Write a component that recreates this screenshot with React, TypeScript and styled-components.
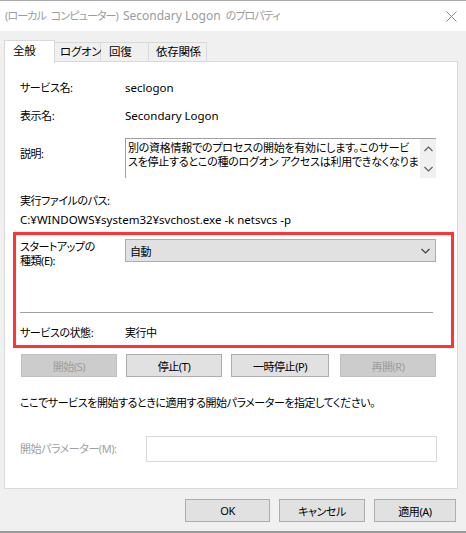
import React from 'react';
import styled, { createGlobalStyle } from 'styled-components';

const GlobalStyle = createGlobalStyle`
  html, body {
    margin: 0;
    padding: 0;
    background: #f0f0f0;
  }
  body {
    font-family: "Noto Sans", "Noto Sans CJK JP", sans-serif;
    font-size: 11px;
    color: #000;
  }
`;

const tabs = [
  { label: '全般', width: 51, pad: 9, active: true },
  { label: 'ログオン', width: 46, pad: 5 },
  { label: '回復', width: 48, pad: 8 },
  { label: '依存関係', width: 58, pad: 7 },
];

const Chevron: React.FC<{ up?: boolean; color?: string }> = ({ up, color = '#606060' }) => (
  <svg width="9" height="6" viewBox="0 0 9 6">
    <path
      d={up ? 'M0.5 5 L4.5 1 L8.5 5' : 'M0.5 1 L4.5 5 L8.5 1'}
      fill="none"
      stroke={color}
      strokeWidth="1.2"
    />
  </svg>
);

const App: React.FC = () => {
  return (
    <Window>
      <GlobalStyle />
      <TitleBar>
        <Title>
          (ローカル コンピューター) <TitleLatin>Secondary Logon</TitleLatin> のプロパティ
        </Title>
        <CloseIcon width="11" height="11" viewBox="0 0 11 11">
          <path d="M0.5 0.5 L10.5 10.5 M10.5 0.5 L0.5 10.5" stroke="#8a8a8a" strokeWidth="1" />
        </CloseIcon>
      </TitleBar>

      <TabRow>
        {tabs.map((t) => (
          <Tab key={t.label} $active={t.active} $width={t.width} $pad={t.pad}>
            {t.label}
          </Tab>
        ))}
      </TabRow>

      <Panel>
        <InfoRow $top={18}>
          <Label>サービス名:</Label>
          <Value $latin>seclogon</Value>
        </InfoRow>
        <InfoRow $top={12}>
          <Label>表示名:</Label>
          <Value $latin>Secondary Logon</Value>
        </InfoRow>
        <DescRow>
          <Label $pad={8}>説明:</Label>
          <DescBox>
            <DescText>
              別の資格情報でのプロセスの開始を有効にします。このサービ
              <br />
              スを停止するとこの種のログオン アクセスは利用できなくなりま
            </DescText>
            <ScrollBar>
              <Chevron up />
              <Chevron />
            </ScrollBar>
          </DescBox>
        </DescRow>

        <PlainLine $top={15}>実行ファイルのパス:</PlainLine>
        <PlainLine $top={3} $latin>
          C:¥WINDOWS¥system32¥svchost.exe -k netsvcs -p
        </PlainLine>

        <Highlight>
          <StartupRow>
            <TwoLineLabel>
              スタートアップの
              <br />
              種類(E):
            </TwoLineLabel>
            <Combo>
              <span>自動</span>
              <Chevron color="#404040" />
            </Combo>
          </StartupRow>
          <Separator />
          <StatusRow>
            <Label>サービスの状態:</Label>
            <Value>実行中</Value>
          </StatusRow>
        </Highlight>

        <ButtonRow>
          <ServiceButton disabled>開始(S)</ServiceButton>
          <ServiceButton>停止(T)</ServiceButton>
          <ServiceButton $width={98}>一時停止(P)</ServiceButton>
          <ServiceButton disabled>再開(R)</ServiceButton>
        </ButtonRow>

        <PlainLine $top={18}>ここでサービスを開始するときに適用する開始パラメーターを指定してください。</PlainLine>

        <ParamRow>
          <ParamLabel>開始パラメーター(M):</ParamLabel>
          <ParamInput />
        </ParamRow>
      </Panel>

      <DialogButtons>
        <DialogButton $width={85}>OK</DialogButton>
        <DialogButton $width={86}>キャンセル</DialogButton>
        <DialogButton $width={82}>適用(A)</DialogButton>
      </DialogButtons>
    </Window>
  );
};

const Window = styled.div`
  width: 466px;
  height: 533px;
  box-sizing: border-box;
  background: #f0f0f0;
  border-bottom: 2px solid #9a9a9a;
  overflow: hidden;
  font-feature-settings: "palt";
  letter-spacing: -0.45px;
`;

const TitleBar = styled.div`
  height: 31px;
  box-sizing: border-box;
  background: #fff;
  border-top: 1px solid #aaaaaa;
  display: flex;
  align-items: center;
  justify-content: space-between;
  padding: 0 9px 0 5px;
`;

const Title = styled.div`
  color: #9b9b9b;
  font-size: 11px;
  line-height: 16px;
  letter-spacing: -0.9px;
  word-spacing: 3px;
  white-space: nowrap;
`;

const TitleLatin = styled.span`
  font-size: 12px;
  letter-spacing: 0;
  word-spacing: 0;
`;

const CloseIcon = styled.svg`
  display: block;
  margin-top: 1px;
`;

const TabRow = styled.div`
  display: flex;
  align-items: flex-end;
  padding: 8px 0 0 4px;
  height: 23px;
  position: relative;
  z-index: 1;
`;

const Tab = styled.div<{ $active?: boolean; $width: number; $pad: number }>`
  width: ${(p) => p.$width}px;
  box-sizing: border-box;
  height: ${(p) => (p.$active ? 23 : 20)}px;
  border: 1px solid #d9d9d9;
  border-bottom: ${(p) => (p.$active ? 'none' : '1px solid #d9d9d9')};
  border-left: ${(p) => (p.$active ? '1px solid #d9d9d9' : 'none')};
  background: ${(p) => (p.$active ? '#fff' : '#f0f0f0')};
  display: flex;
  align-items: center;
  justify-content: flex-start;
  padding-left: ${(p) => p.$pad - (p.$active ? 1 : 0)}px;
  padding-bottom: ${(p) => (p.$active ? 2 : 0)}px;
  margin-bottom: ${(p) => (p.$active ? -1 : 0)}px;
  font-size: 11.5px;
  letter-spacing: -0.3px;
  line-height: 14px;
  white-space: nowrap;
`;

const Panel = styled.div`
  margin-left: 4px;
  width: 454px;
  height: 428px;
  box-sizing: border-box;
  background: #fff;
  border: 1px solid #d9d9d9;
  margin-top: -1px;
  display: flex;
  flex-direction: column;
`;

const InfoRow = styled.div<{ $top: number }>`
  display: flex;
  align-items: center;
  margin-top: ${(p) => p.$top}px;
  padding-left: 15px;
  height: 16px;
`;

const Label = styled.div<{ $pad?: number }>`
  width: 105px;
  flex: none;
  line-height: 16px;
  padding-top: ${(p) => p.$pad ?? 0}px;
`;

const Value = styled.div<{ $latin?: boolean }>`
  line-height: 16px;
  font-size: ${(p) => (p.$latin ? 11.5 : 11)}px;
  letter-spacing: ${(p) => (p.$latin ? 0 : -0.45)}px;
`;

const DescRow = styled.div`
  display: flex;
  align-items: flex-start;
  margin-top: 14px;
  padding-left: 15px;
`;

const DescBox = styled.div`
  width: 311px;
  height: 40px;
  box-sizing: border-box;
  border-top: 1px solid #a0a0a0;
  border-left: 1px solid #a0a0a0;
  display: flex;
`;

const DescText = styled.div`
  flex: 1;
  padding: 2px 0 0 2px;
  line-height: 14px;
  height: 30px;
  overflow: hidden;
  white-space: nowrap;
  letter-spacing: -0.25px;
`;

const ScrollBar = styled.div`
  width: 16px;
  background: #f0f0f0;
  display: flex;
  flex-direction: column;
  align-items: center;
  justify-content: space-between;
  padding: 7px 0 6px;
  box-sizing: border-box;
`;

const PlainLine = styled.div<{ $top: number; $latin?: boolean }>`
  margin-top: ${(p) => p.$top}px;
  padding-left: 15px;
  line-height: 16px;
  white-space: nowrap;
  font-size: ${(p) => (p.$latin ? 11.5 : 11)}px;
  letter-spacing: ${(p) => (p.$latin ? 0 : -0.45)}px;
`;

const Highlight = styled.div`
  margin: 4px 3px 0 8px;
  border: 3px solid #ff3535;
  padding: 4px 0 4px 4px;
`;

const StartupRow = styled.div`
  display: flex;
  align-items: flex-start;
`;

const TwoLineLabel = styled.div`
  width: 105px;
  flex: none;
  line-height: 14px;
  padding-top: 1px;
`;

const Combo = styled.div`
  width: 311px;
  height: 23px;
  box-sizing: border-box;
  background: #e1e1e1;
  border: 1px solid #adadad;
  display: flex;
  align-items: center;
  justify-content: space-between;
  padding: 0 5px 0 4px;
`;

const Separator = styled.div`
  height: 1px;
  background: #a0a0a0;
  margin: 44px 18px 0 0;
`;

const StatusRow = styled.div`
  display: flex;
  align-items: center;
  margin-top: 12px;
  height: 16px;
`;

const ButtonRow = styled.div`
  display: flex;
  gap: 9px;
  margin-top: 6px;
  padding-left: 16px;
`;

const ServiceButton = styled.div<{ disabled?: boolean; $width?: number }>`
  width: ${(p) => p.$width ?? 96}px;
  height: 23px;
  box-sizing: border-box;
  display: flex;
  align-items: center;
  justify-content: center;
  background: ${(p) => (p.disabled ? '#cccccc' : '#e1e1e1')};
  border: 1px solid ${(p) => (p.disabled ? '#bfbfbf' : '#adadad')};
  color: ${(p) => (p.disabled ? '#9d9d9d' : '#000')};
  &:nth-child(4) {
    margin-left: 2px;
  }
`;

const ParamRow = styled.div`
  display: flex;
  align-items: center;
  margin-top: 25px;
  padding-left: 15px;
`;

const ParamLabel = styled.div`
  width: 126px;
  flex: none;
  color: #a0a0a0;
  line-height: 16px;
`;

const ParamInput = styled.div`
  width: 291px;
  height: 26px;
  box-sizing: border-box;
  border: 1px solid #d9d9d9;
  background: #fff;
`;

const DialogButtons = styled.div`
  display: flex;
  justify-content: flex-end;
  gap: 9px;
  margin-top: 10px;
  padding-right: 10px;
`;

const DialogButton = styled.div<{ $width: number }>`
  width: ${(p) => p.$width}px;
  height: 23px;
  box-sizing: border-box;
  display: flex;
  align-items: center;
  justify-content: center;
  background: #e1e1e1;
  border: 1px solid #adadad;
`;

export default App;
